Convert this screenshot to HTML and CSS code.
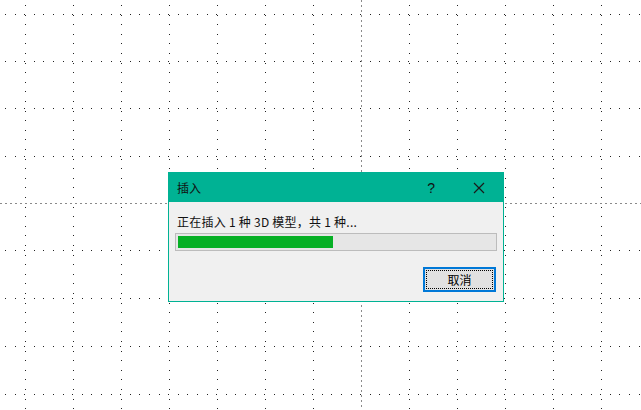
FILE: index.html
```html
<!DOCTYPE html>
<html lang="zh-CN">
<head>
    <meta charset="UTF-8">
    <meta name="viewport" content="width=device-width, initial-scale=1.0">
    <title>插入</title>
    <link rel="stylesheet" href="styles.css">
</head>
<body>
    <div class="canvas">
        <svg class="grid" width="641" height="410" viewBox="0 0 641 410">
            <g class="dots">
                <line x1="25" y1="0" x2="25" y2="410"/>
                <line x1="73" y1="0" x2="73" y2="410"/>
                <line x1="121" y1="0" x2="121" y2="410"/>
                <line x1="169" y1="0" x2="169" y2="410"/>
                <line x1="217" y1="0" x2="217" y2="410"/>
                <line x1="265" y1="0" x2="265" y2="410"/>
                <line x1="313" y1="0" x2="313" y2="410"/>
                <line x1="409" y1="0" x2="409" y2="410"/>
                <line x1="457" y1="0" x2="457" y2="410"/>
                <line x1="505" y1="0" x2="505" y2="410"/>
                <line x1="553" y1="0" x2="553" y2="410"/>
                <line x1="601" y1="0" x2="601" y2="410"/>
                <line x1="0" y1="14" x2="641" y2="14"/>
                <line x1="0" y1="61" x2="641" y2="61"/>
                <line x1="0" y1="108" x2="641" y2="108"/>
                <line x1="0" y1="156" x2="641" y2="156"/>
                <line x1="0" y1="250" x2="641" y2="250"/>
                <line x1="0" y1="298" x2="641" y2="298"/>
                <line x1="0" y1="346" x2="641" y2="346"/>
                <line x1="0" y1="394" x2="641" y2="394"/>
            </g>
            <g class="axis">
                <line x1="361.5" y1="0" x2="361.5" y2="410"/>
                <line x1="0" y1="203.5" x2="641" y2="203.5"/>
            </g>
        </svg>

        <div class="dialog">
            <div class="title-bar">
                <span class="title">插入</span>
                <span class="help">?</span>
                <svg class="close" width="12" height="12" viewBox="0 0 12 12">
                    <path d="M1 1 L11 11 M11 1 L1 11"/>
                </svg>
            </div>
            <div class="dialog-body">
                <p class="status">正在插入 1 种 3D 模型，共 1 种...</p>
                <div class="progress">
                    <div class="progress-fill" style="width: 155px;"></div>
                </div>
                <div class="actions">
                    <button class="cancel-button"><span>取消</span></button>
                </div>
            </div>
        </div>
    </div>
</body>
</html>
```

FILE: styles.css
```css
html, body {
    margin: 0;
    padding: 0;
    background-color: #ffffff;
}
body {
    font-family: "Noto Sans CJK SC", "Noto Sans", sans-serif;
    font-size: 12px;
    color: #000000;
}
.canvas {
    position: relative;
    width: 641px;
    height: 410px;
    overflow: hidden;
}
.grid {
    position: absolute;
    left: 0;
    top: 0;
}
.grid line {
    shape-rendering: crispEdges;
}
.dots line {
    stroke: #222222;
    stroke-width: 1;
    stroke-dasharray: 1 8.6;
    stroke-dashoffset: -5;
}
.axis line {
    stroke: #8a8a8a;
    stroke-width: 1;
    stroke-dasharray: 2 3;
}
.dialog {
    position: absolute;
    left: 168px;
    top: 172px;
    width: 334px;
    border: 1px solid #00b294;
    background-color: #f0f0f0;
}
.title-bar {
    display: flex;
    align-items: center;
    height: 29px;
    margin-top: -1px;
    padding: 1px 18px 0 8px;
    background-color: #00b294;
}
.title {
    flex: 1;
    font-size: 12px;
    color: #111111;
}
.help {
    font-family: "Liberation Sans", sans-serif;
    font-size: 14px;
    color: #111111;
    margin-right: 38px;
}
.close path {
    stroke: #1a1a1a;
    stroke-width: 1.2;
    fill: none;
}
.dialog-body {
    padding: 12px 6px 9px 6px;
}
.status {
    margin: 0 0 3px 2px;
    line-height: 16px;
    font-size: 12px;
    letter-spacing: 0.25px;
    color: #111111;
}
.progress {
    height: 12px;
    padding: 2px;
    border: 1px solid #bcbcbc;
    background-color: #e6e6e6;
}
.progress-fill {
    height: 12px;
    background-color: #06b025;
}
.actions {
    display: flex;
    justify-content: flex-end;
    margin-top: 16px;
    padding-right: 1px;
}
.cancel-button {
    width: 73px;
    height: 25px;
    padding: 1px;
    border: 2px solid #0078d7;
    background-color: #e1e1e1;
    font-family: inherit;
    font-size: 12px;
    color: #000000;
    cursor: pointer;
    box-sizing: border-box;
}
.cancel-button span {
    display: flex;
    align-items: center;
    justify-content: center;
    height: 100%;
    border: 1px dotted #000000;
    box-sizing: border-box;
}
```
